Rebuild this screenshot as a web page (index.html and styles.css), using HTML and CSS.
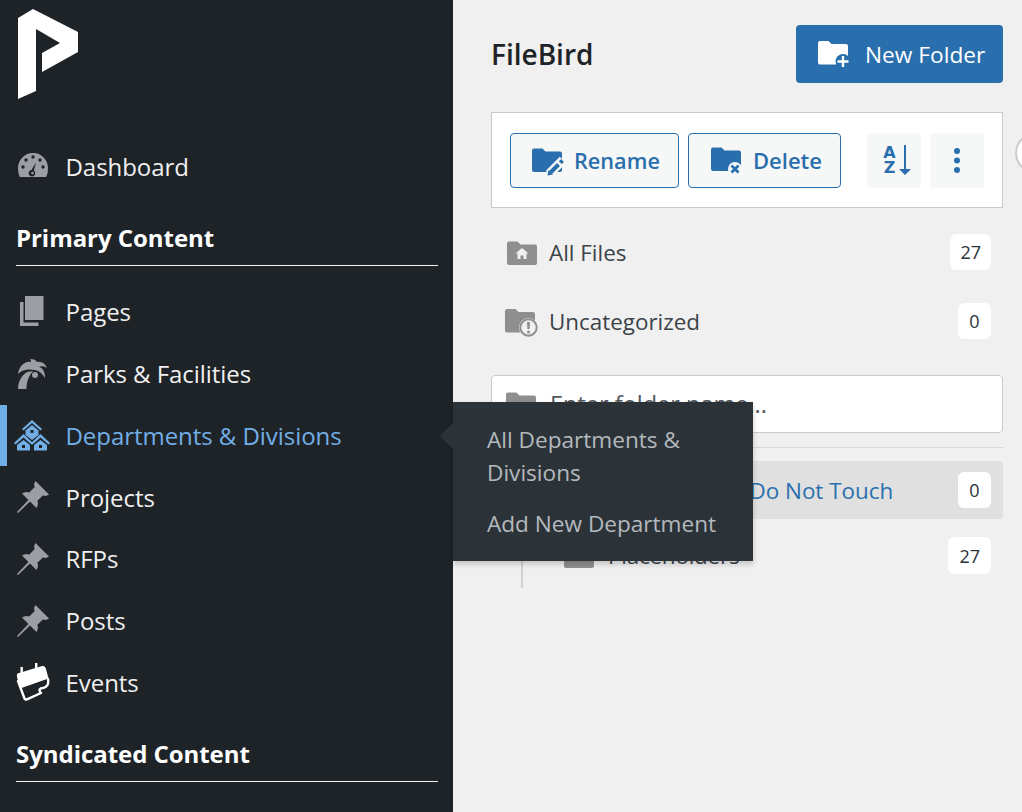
FILE: index.html
```html
<!DOCTYPE html>
<html lang="en">
<head>
<meta charset="utf-8">
<title>FileBird</title>
<link rel="stylesheet" href="styles.css">
</head>
<body>
<svg class="defs" aria-hidden="true">
  <symbol id="pin" viewBox="0 0 34 34"><path d="M19.500 1 33 14.500l-3 1.500-3.200-.6-5.400 5.400c1 2.600.6 5-1 7.200L14 21.600 2 33l-1-1 11.400-12L6 13.600c2.200-1.600 4.600-2 7.200-1l5.400-5.400-.6-3.200z"/></symbol>
  <symbol id="folder" viewBox="0 0 30 24"><path d="M0 2.500A2 2 0 0 1 2 .5h8.500l3 3H28a2 2 0 0 1 2 2V22a2 2 0 0 1-2 2H2a2 2 0 0 1-2-2z"/></symbol>
</svg>
<div class="app">
  <nav class="side">
    <svg class="logo" viewBox="0 0 60 91"><path fill="#fff" d="M0 9 15 0l45 23v20L24 63V44l18-10L18 20v62L0 90z"/></svg>
    <div class="menu-item first">
      <span class="mi"><svg class="ic-dash" width="32" height="24" viewBox="0 0 32 24"><path fill="#9b9fa4" d="M16 0A15 15 0 0 0 1 15c0 3.200.5 6.200 1.800 9h26.400A20 20 0 0 0 31 15 15 15 0 0 0 16 0z"/><g fill="#1e2327"><circle cx="16" cy="4" r="1.700"/><circle cx="9" cy="7" r="1.700"/><circle cx="23" cy="7" r="1.700"/><circle cx="6" cy="14" r="1.700"/><circle cx="26" cy="14" r="1.700"/><path d="M19 9.500 16.900 17.500a3.300 3.300 0 1 1-2.400-.6z"/></g><circle cx="15.500" cy="20" r="1.300" fill="#9b9fa4"/></svg></span>
      <span>Dashboard</span>
    </div>
    <div class="menu-head">Primary Content</div>
    <div class="menu-item">
      <span class="mi"><svg width="28" height="32" viewBox="0 0 28 32"><path fill="#9b9fa4" d="M9 0h18.500v24H9z"/><path fill="#9b9fa4" d="M4 6h3.500v20.500h15V30H4z"/></svg></span>
      <span>Pages</span>
    </div>
    <div class="menu-item">
      <span class="mi"><svg width="32" height="32" viewBox="0 0 32 32" fill="#9b9fa4"><path d="M2 16C3 8 9 3 15 4c0-1 0-2-1-3 4 0 6 1 7 3 4-1 8 1 10 6-3-2-6-2-8-1 4 1 6 5 6 11-3-5-7-8-11-8-5-1-11-1-16 4z"/><path d="M2 31c0-7 3-13 9-17l6-1c-5 6-6.500 12-6.500 18z"/><circle cx="19" cy="17" r="3"/></svg></span>
      <span>Parks &amp; Facilities</span>
    </div>
    <div class="menu-item active">
      <span class="mi"><svg width="36" height="31" viewBox="0 0 36 31" fill="#72aee6"><path d="M18 0 28 9l-1.500 1.500L18 3 9.500 10.500 8 9z"/><path d="M18 5l6.500 5.500V15L18 20l-6.500-5v-4.500zM16.500 10v3h3v-3z" fill-rule="evenodd"/><path d="M9.500 14 19 23l-1.500 1.500-8-7-8 7L0 23z"/><path d="M26.500 14 36 23l-1.500 1.500-8-7-8 7L17 23z"/><path d="M9.500 20l6.500 5v5.500H3V25zM8 25v3h3v-3z" fill-rule="evenodd"/><path d="M26.500 20l6.500 5v5.500H20V25zM25 25v3h3v-3z" fill-rule="evenodd"/></svg></span>
      <span>Departments &amp; Divisions</span>
    </div>
    <div class="menu-item"><span class="mi"><svg class="ic-pin"><use href="#pin"/></svg></span><span>Projects</span></div>
    <div class="menu-item"><span class="mi"><svg class="ic-pin"><use href="#pin"/></svg></span><span>RFPs</span></div>
    <div class="menu-item"><span class="mi"><svg class="ic-pin"><use href="#pin"/></svg></span><span>Posts</span></div>
    <div class="menu-item">
      <span class="mi"><svg width="34" height="38" viewBox="0 0 34 38"><path fill="#fff" d="M1.500 10.500 26 3q3-.5 4 3l2.500 9.500L4 25.500 1 14q-.5-2.500.5-3.500z"/><path fill="none" stroke="#fff" stroke-width="2.400" stroke-linejoin="round" stroke-linecap="round" d="M2 18l6.500 17.500q1 1.500 2.500.8L25 30c-3-3-1-5 2-5 4-.5 6-4 5-9"/><path fill="#fff" d="M4.500 4h2.400v6H4.500zM19 0h2.400v6H19z"/></svg></span>
      <span>Events</span>
    </div>
    <div class="menu-head">Syndicated Content</div>
  </nav>

  <main class="main">
    <header class="top">
      <h1 class="title">FileBird</h1>
      <button class="new-btn">
        <svg width="32" height="30" viewBox="0 0 32 30"><use href="#folder" width="30" height="25" y="1" fill="#fff"/><circle cx="25" cy="22.500" r="7.500" fill="#2a6fad"/><path fill="#fff" d="M23.800 17h2.400v4.300h4.300v2.400h-4.300V28h-2.400v-4.300h-4.300v-2.400h4.300z"/></svg>
        <span>New Folder</span>
      </button>
    </header>

    <section class="tools">
      <button class="tool rename">
        <svg width="33" height="28" viewBox="0 0 33 28"><use href="#folder" width="30" height="24" fill="#2a6fad"/><path fill="none" stroke="#f6f7f7" stroke-width="9" d="M17 26 31 12"/><path fill="none" stroke="#2a6fad" stroke-width="4" d="M18.500 24.500l8-8"/><path fill="none" stroke="#2a6fad" stroke-width="4" d="M28.300 14.700l2.200-2.200"/><path fill="#2a6fad" d="m15.500 27.500 1-5.500 4.500 4.500z"/></svg>
        <span>Rename</span>
      </button>
      <button class="tool delete">
        <svg width="31" height="29" viewBox="0 0 31 29"><use href="#folder" width="30" height="24" fill="#2a6fad"/><circle cx="24" cy="22" r="7" fill="#f6f7f7"/><path stroke="#2a6fad" stroke-width="2.800" d="M20.500 18.500l7 7m0-7-7 7"/></svg>
        <span>Delete</span>
      </button>
      <button class="square sort">
        <span class="az">A Z</span>
        <svg width="12" height="30" viewBox="0 0 12 30"><path fill="#2a6fad" d="M5 0h2v24h5l-6 6-6-6h5z"/></svg>
      </button>
      <button class="square more">
        <svg width="6" height="25" viewBox="0 0 6 25" fill="#2a6fad"><circle cx="3" cy="3" r="3"/><circle cx="3" cy="12.500" r="3"/><circle cx="3" cy="22" r="3"/></svg>
      </button>
    </section>
    <span class="handle"></span>

    <div class="row all">
      <svg width="30" height="25" viewBox="0 0 30 25"><use href="#folder" width="30" height="24" y="1" fill="#8f8f8f"/><path fill="#f0f0f0" d="M15 8l6.500 5.500h-2V19h-3v-3.500h-3V19h-3v-5.500h-2z"/></svg>
      <span class="label">All Files</span>
      <span class="count">27</span>
    </div>
    <div class="row uncat">
      <svg width="34" height="30" viewBox="0 0 34 30"><use href="#folder" width="30" height="25" fill="#8f8f8f"/><circle cx="23.500" cy="19.500" r="9.500" fill="#f0f0f0"/><circle cx="23.500" cy="19.500" r="8.200" fill="none" stroke="#8f8f8f" stroke-width="2"/><path fill="#8f8f8f" d="M22 14h3l-.4 7h-2.200z"/><circle cx="23.500" cy="24" r="1.500" fill="#8f8f8f"/></svg>
      <span class="label">Uncategorized</span>
      <span class="count">0</span>
    </div>
    <div class="enter">
      <svg width="30" height="24" viewBox="0 0 30 24"><use href="#folder" width="30" height="24" fill="#8f8f8f"/></svg>
      <span>Enter folder name...</span>
    </div>
    <hr class="sep">
    <div class="tree">
      <div class="row selected">
        <svg width="30" height="24" viewBox="0 0 30 24"><use href="#folder" width="30" height="24" fill="#2a6fad"/></svg>
        <span class="label">Templates - Do Not Touch</span>
        <span class="count">0</span>
      </div>
      <div class="row child">
        <svg width="30" height="24" viewBox="0 0 30 24"><use href="#folder" width="30" height="24" fill="#8f8f8f"/></svg>
        <span class="label">Placeholders</span>
        <span class="count">27</span>
      </div>
    </div>
  </main>
</div>

<div class="flyout">
  <a>All Departments &amp; Divisions</a>
  <a>Add New Department</a>
</div>
</body>
</html>
```

FILE: styles.css
```css
* { box-sizing: border-box; }
html, body { margin: 0; height: 100%; overflow: hidden; }
body { font-family: "Open Sans", "Noto Sans", sans-serif; background: #f0f0f0; color: #3c434a; }
.defs { display: none; }
.app { display: flex; height: 812px; }
button { font: inherit; border: 0; padding: 0; }

.side { width: 453px; flex: none; background: #1e2327; color: #f0f0f1; padding: 9px 15px 0 16px; font-size: 24px; letter-spacing: -.05px; }
.logo { display: block; width: 60px; height: 91px; margin-left: 2px; }
.menu-item { display: flex; align-items: center; height: 61.75px; margin-left: -16px; padding-left: 16px; position: relative; }
.menu-item.first { margin-top: 35px; height: 62px; }
.mi { width: 49.5px; flex: none; display: flex; align-items: center; }
.ic-pin { width: 34px; height: 34px; fill: #9b9fa4; }
.ic-dash { margin-left: 1px; margin-top: -2px; }
.menu-item.active { color: #72aee6; }
.menu-item.active::before { content: ""; position: absolute; left: 0; top: 0; bottom: 0; width: 7px; background: #72aee6; }
.menu-item.active .mi svg { margin-left: -2px; }
.menu-head { font-weight: 700; color: #fff; height: 52px; margin-top: 17px; border-bottom: 1px solid #f0f0f1; line-height: 48px; width: 422px; }
.menu-head + .menu-item { margin-top: 15px; }

.main { flex: 1; min-width: 0; padding: 25px 19px 0 38px; position: relative; }
.top { display: flex; justify-content: space-between; align-items: center; height: 58px; }
.title { margin: 0; font-size: 28px; font-weight: 600; color: #1d2327; }
.new-btn { width: 207px; height: 58px; background: #2a6fad; color: #fff; border-radius: 4px; display: flex; align-items: center; gap: 15px; padding-left: 22px; font-size: 22.7px; }
.tools { display: flex; align-items: center; margin-top: 29px; height: 96px; background: #fff; border: 1px solid #c8cacd; padding-left: 18px; }
.tool { height: 55px; background: #f6f7f7; border: 1px solid #2a6fad; border-radius: 4px; color: #2a6fad; font-size: 22px; font-weight: 600; display: flex; align-items: center; padding-left: 21px; }
.rename { width: 169px; gap: 9px; font-size: 21.7px; }
.delete { width: 153px; margin-left: 9px; padding-left: 22px; gap: 11px; }
.tool svg { margin-top: 3px; }
.square { width: 54px; height: 55px; background: #f6f7f7; border-radius: 4px; display: flex; align-items: center; justify-content: center; }
.sort { margin-left: 26px; gap: 2px; padding-left: 5px; }
.more { margin-left: 9px; }
.az { display: block; width: 14px; text-align: center; color: #2a6fad; font-size: 16px; line-height: 15px; font-weight: 800; font-family: "DejaVu Sans", sans-serif; }
.handle { position: absolute; left: 562px; top: 133px; width: 40px; height: 40px; border-radius: 50%; background: #fff; border: 2px solid #c8cacd; }

.row { display: flex; align-items: center; font-size: 22.4px; position: relative; }
.label { flex: 1; white-space: nowrap; }
.count { background: #fff; border-radius: 6px; height: 36px; min-width: 33px; padding: 0 10px; display: flex; align-items: center; justify-content: center; font-size: 18px; color: #2c3338; }
.all { margin-top: 26px; height: 36px; padding: 0 12px 0 16px; gap: 12px; }
.uncat { margin-top: 33px; height: 36px; padding: 0 12px 0 14px; gap: 10px; }
.uncat svg { margin-top: 4px; }
.enter { margin-top: 36px; height: 58px; background: #fff; border: 1px solid #c8cacd; border-radius: 4px; display: flex; align-items: center; padding-left: 14px; gap: 14px; font-size: 23.5px; color: #50575e; }
.sep { margin: 14px 0 13px; border: 0; border-top: 1px solid #d7d8d9; }
.tree { position: relative; padding-bottom: 14px; }
.tree::before { content: ""; position: absolute; left: 30px; top: 0; bottom: 0; width: 2px; background: #d0d1d3; }
.selected { height: 58px; background: #e0e0e0; border-radius: 4px; padding: 0 12px 0 87px; gap: 14px; color: #2a6fad; }
.child { margin-top: 18px; height: 37px; padding: 0 12px 0 73px; gap: 14px; letter-spacing: -.2px; }
.child .count { height: 37px; padding: 0 11px; letter-spacing: 0; }

.flyout { position: absolute; left: 453px; top: 402px; width: 300px; height: 159px; background: #2c3338; color: #b4b9be; font-size: 22.6px; line-height: 33px; padding: 21px 10px 0 34px; box-shadow: 0 3px 6px rgba(0,0,0,.2); }
.flyout::before { content: ""; position: absolute; left: -13px; top: 21px; border: 13px solid transparent; border-left: 0; border-right-color: #2c3338; }
.flyout a { display: block; width: 240px; margin-bottom: 18px; white-space: normal; }
.flyout a + a { width: auto; white-space: nowrap; }
```
